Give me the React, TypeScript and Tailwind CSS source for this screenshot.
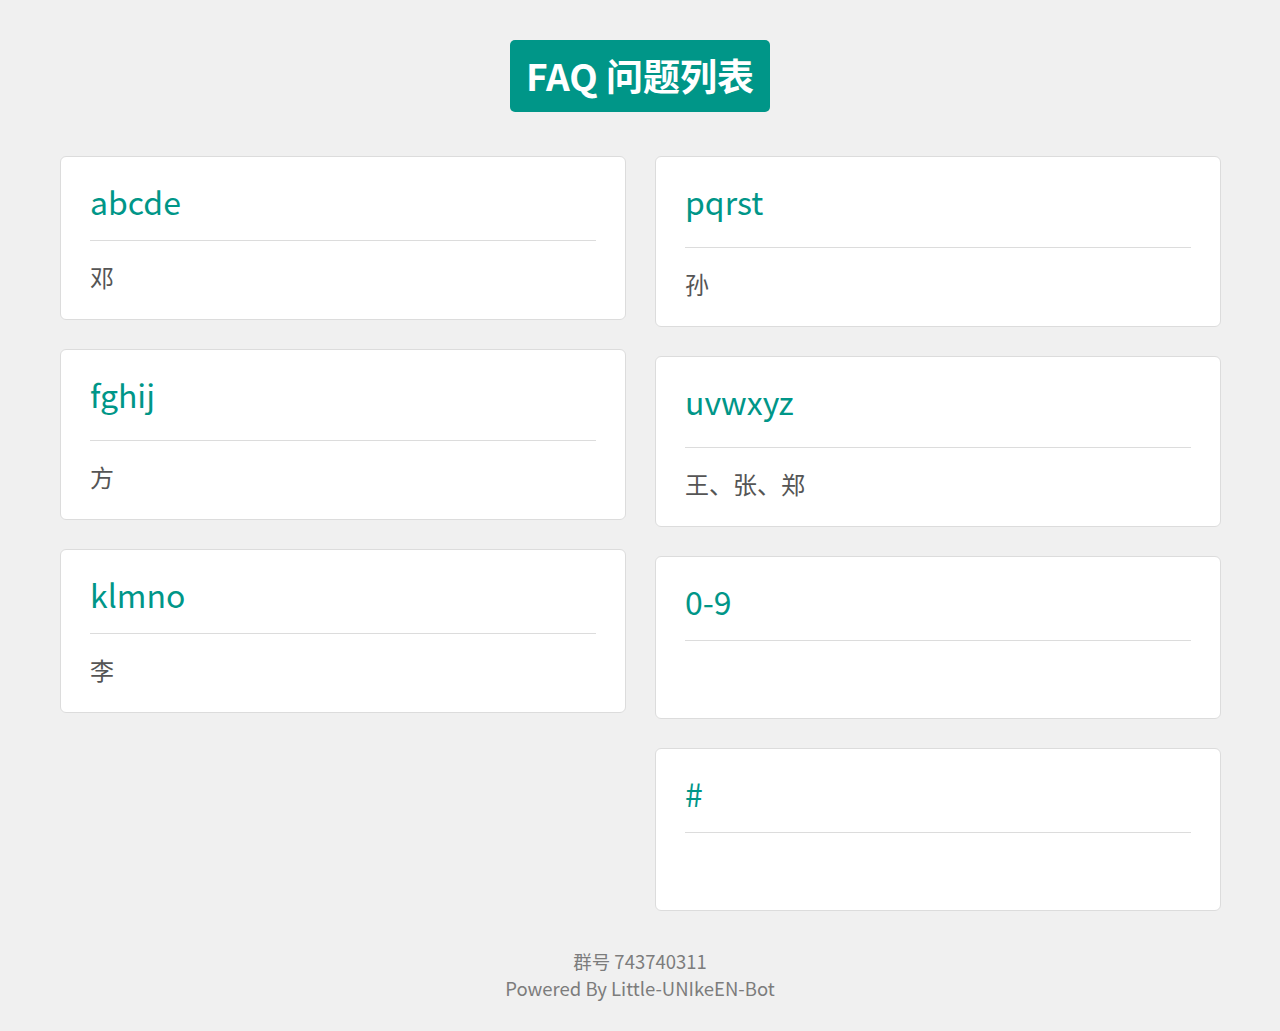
import React from "react";

type FaqGroup = {
   key: string;
   names: string;
   tall?: boolean;
};

const leftGroups: FaqGroup[] = [
   { key: "abcde", names: "邓" },
   { key: "fghij", names: "方", tall: true },
   { key: "klmno", names: "李" },
];

const rightGroups: FaqGroup[] = [
   { key: "pqrst", names: "孙", tall: true },
   { key: "uvwxyz", names: "王、张、郑", tall: true },
   { key: "0-9", names: "" },
   { key: "#", names: "" },
];

const FONT = "font-['Noto_Sans_CJK_SC','Noto_Sans',sans-serif]";

const GroupCard = ({ group }: { group: FaqGroup }) => {
   return (
      <div className="bg-white border border-[#dcdcdc] rounded-[6px] px-[29px]">
         <div
            className={
               group.tall
                  ? "pt-[21px] pb-[23px] border-b border-[#dcdcdc]"
                  : "pt-[21px] pb-[16px] border-b border-[#dcdcdc]"
            }
         >
            <h2 className="text-[32px] leading-[46px] text-[#009688]">{group.key}</h2>
         </div>
         <div className="pt-[19px] pb-[25px] min-h-[77px]">
            <p className="text-[24px] leading-[34px] text-[#555555]">{group.names}</p>
         </div>
      </div>
   );
};

export default function App() {
   return (
      <div className={`${FONT} min-h-screen bg-[#f0f0f0] pt-[40px] pb-[30px]`}>
         <div className="flex justify-center">
            <h1 className="bg-[#009688] text-white font-bold text-[37px] h-[72px] px-4 rounded-[5px] flex items-center">
               FAQ 问题列表
            </h1>
         </div>

         <div className="grid grid-cols-2 gap-x-[29px] pl-[60px] pr-[59px] mt-[44px] items-start">
            <div className="flex flex-col gap-[29px]">
               {leftGroups.map((g) => (
                  <GroupCard key={g.key} group={g} />
               ))}
            </div>
            <div className="flex flex-col gap-[29px]">
               {rightGroups.map((g) => (
                  <GroupCard key={g.key} group={g} />
               ))}
            </div>
         </div>

         <div className="mt-[37px] text-center text-[18.5px] leading-[27px] text-[#7c7c7c]">
            <p>群号 743740311</p>
            <p>Powered By Little-UNIkeEN-Bot</p>
         </div>
      </div>
   );
}
